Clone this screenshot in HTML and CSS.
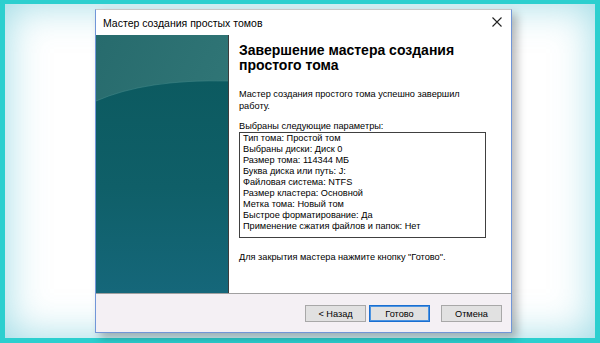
FILE: index.html
```html
<!DOCTYPE html>
<html lang="ru">
<head>
    <meta charset="UTF-8">
    <title>Мастер создания простых томов</title>
    <link rel="stylesheet" href="styles.css">
</head>
<body>
    <div class="frame">
        <div class="window">
            <div class="titlebar">
                <span class="title">Мастер создания простых томов</span>
                <svg class="close" width="10" height="10" viewBox="0 0 10 10">
                    <path d="M0.5 0.5 L9.5 9.5 M9.5 0.5 L0.5 9.5" stroke="#222" stroke-width="1.1" fill="none"/>
                </svg>
            </div>
            <div class="main">
                <div class="sidebar">
                    <svg width="132" height="258" viewBox="0 0 132 258" preserveAspectRatio="none">
                        <defs>
                            <linearGradient id="top" x1="0" y1="0" x2="1" y2="1">
                                <stop offset="0" stop-color="#276b6d"/>
                                <stop offset="1" stop-color="#367c7c"/>
                            </linearGradient>
                            <linearGradient id="low" x1="0" y1="0" x2="0" y2="1">
                                <stop offset="0" stop-color="#0c5a60"/>
                                <stop offset="0.5" stop-color="#0f5f68"/>
                                <stop offset="1" stop-color="#15677a"/>
                            </linearGradient>
                        </defs>
                        <rect width="132" height="258" fill="url(#top)"/>
                        <path d="M0 66 Q50 44 132 46 L132 258 L0 258 Z" fill="url(#low)"/>
                        <path d="M0 66 Q50 44 132 46" stroke="#4a8e8e" stroke-width="1" fill="none" opacity="0.5"/>
                    </svg>
                </div>
                <div class="content">
                    <h1>Завершение мастера создания простого тома</h1>
                    <p class="intro">Мастер создания простого тома успешно завершил работу.</p>
                    <p class="label">Выбраны следующие параметры:</p>
                    <div class="params">
                        <div>Тип тома: Простой том</div>
                        <div>Выбраны диски: Диск 0</div>
                        <div>Размер тома: 114344 МБ</div>
                        <div>Буква диска или путь: J:</div>
                        <div>Файловая система: NTFS</div>
                        <div>Размер кластера: Основной</div>
                        <div>Метка тома: Новый том</div>
                        <div>Быстрое форматирование: Да</div>
                        <div>Применение сжатия файлов и папок: Нет</div>
                    </div>
                    <p class="hint">Для закрытия мастера нажмите кнопку "Готово".</p>
                </div>
            </div>
            <div class="footer">
                <button class="btn">&lt; Назад</button>
                <button class="btn btn-default">Готово</button>
                <button class="btn btn-cancel">Отмена</button>
            </div>
        </div>
    </div>
</body>
</html>
```

FILE: styles.css
```css
body {
    margin: 0;
    padding: 0;
    font-family: 'Liberation Sans', Arial, sans-serif;
    background: #2ccfcf;
}
.frame {
    box-sizing: border-box;
    width: 600px;
    height: 343px;
    border: 5px solid #2ccfcf;
    border-top-width: 4px;
    border-radius: 3px;
    background: #ffffff;
    box-shadow: inset 0 0 40px rgba(70, 185, 205, 0.55);
    padding: 5px 0 0 90px;
}
.window {
    box-sizing: border-box;
    width: 417px;
    height: 324px;
    border: 1px solid #7196d8;
    border-top-color: #c8c8c8;
    display: flex;
    flex-direction: column;
    background: #ffffff;
    box-shadow: 5px 5px 9px rgba(0, 0, 0, 0.28);
}
.titlebar {
    height: 25px;
    display: flex;
    align-items: center;
    justify-content: space-between;
    padding: 0 9px 0 7px;
}
.title {
    font-size: 10.5px;
    color: #000;
}
.close {
    display: block;
    margin-bottom: 2px;
}
.main {
    display: flex;
    height: 258px;
}
.sidebar {
    width: 132px;
    border-right: 1px solid #3c3c3c;
}
.sidebar svg {
    display: block;
}
.content {
    flex: 1;
    padding: 8px 10px 0 10px;
    font-size: 9.2px;
    color: #000;
}
.content h1 {
    margin: 0;
    font-size: 14px;
    line-height: 15px;
    font-weight: bold;
    color: #000;
    width: 230px;
}
.intro {
    margin: 15px 0 0;
    line-height: 12px;
    width: 232px;
}
.label {
    margin: 9px 0 0;
    line-height: 11px;
}
.params {
    margin-top: 0;
    width: 247px;
    height: 106px;
    border: 1px solid #404040;
    padding: 0 0 0 3px;
    box-sizing: border-box;
    line-height: 11px;
}
.hint {
    margin: 14px 0 0;
    line-height: 11px;
}
.footer {
    flex: 1;
    border-top: 1px solid #a0a0a0;
    background: #f4f0f4;
    display: flex;
    justify-content: flex-end;
    align-items: flex-start;
    padding: 11px 9px 0 0;
}
.btn {
    box-sizing: border-box;
    width: 61px;
    height: 17px;
    margin: 0 0 0 3px;
    padding: 0;
    border: 1px solid #a8a8a8;
    background: #e1e1e1;
    font-family: 'Liberation Sans', Arial, sans-serif;
    font-size: 9.2px;
    color: #000;
}
.btn-default {
    border: 1px solid #1a6fd1;
    box-shadow: inset 0 0 0 1px #4d94e0;
}
.btn-cancel {
    margin-left: 11px;
}
```
